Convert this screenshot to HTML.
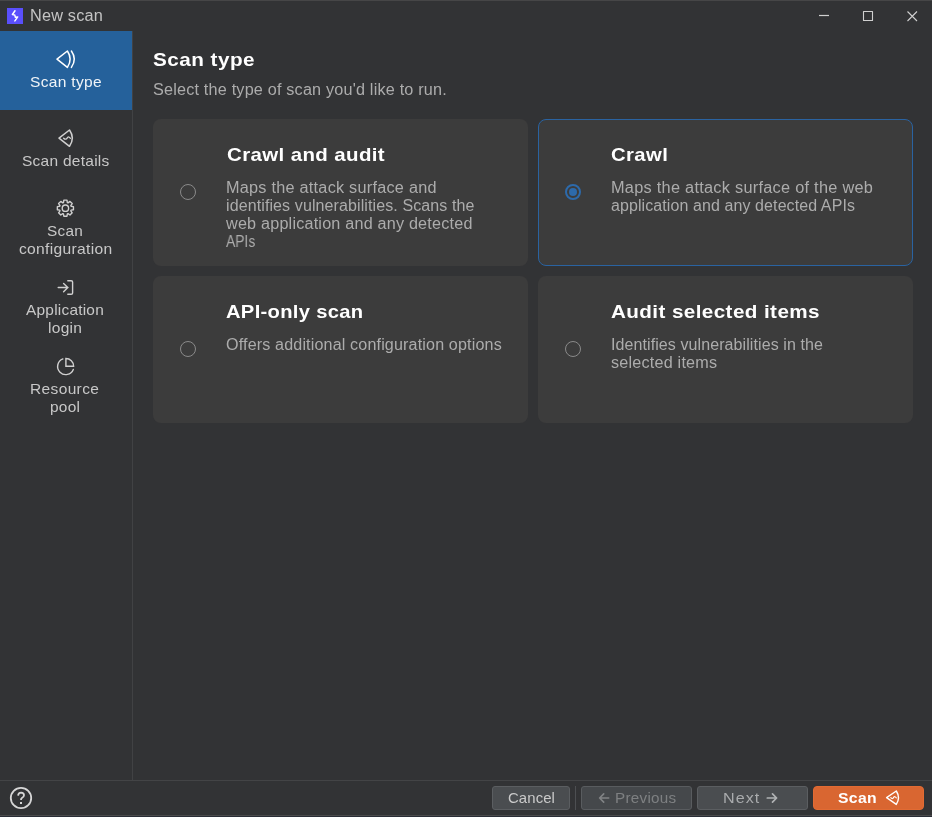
<!DOCTYPE html>
<html><head><meta charset="utf-8">
<style>
html,body{margin:0;padding:0;}
body{width:932px;height:817px;overflow:hidden;background:#323335;position:relative;font-family:"Liberation Sans",sans-serif;}
.a{position:absolute;}
.t{position:absolute;white-space:nowrap;line-height:1;transform-origin:0 0;will-change:transform;}
.card{position:absolute;background:#3c3c3c;border-radius:8px;box-sizing:border-box;}
.card.sel{border:1px solid #2a63a1;}
.radio{position:absolute;width:16px;height:16px;box-sizing:border-box;border-radius:50%;border:1.3px solid #8a8a8a;}
.radio.on{border:2.2px solid #2d6aab;}
.radio.on::after{content:"";position:absolute;left:1.8px;top:1.8px;width:8px;height:8px;border-radius:50%;background:#2d6aab;}
.btn{position:absolute;box-sizing:border-box;border-radius:3px;border:1px solid #5b5e61;background:#45484b;height:24px;top:786px;}
svg{position:absolute;left:0;top:0;}
</style></head><body>
<div class="a" style="left:0;top:0;width:932px;height:1px;background:#464647;"></div>
<div class="a" style="left:7px;top:8px;width:16px;height:16px;background:#5a4ffc;"></div>

<div class="a" style="left:0;top:31px;width:132px;height:79px;background:#25619b;"></div>
<div class="a" style="left:132px;top:31px;width:1px;height:749px;background:#414244;"></div>

<div class="card" style="left:153px;top:119px;width:375px;height:147px;"></div>
<div class="card sel" style="left:538px;top:119px;width:375px;height:147px;"></div>
<div class="card" style="left:153px;top:276px;width:375px;height:147px;"></div>
<div class="card" style="left:538px;top:276px;width:375px;height:147px;"></div>

<div class="radio" style="left:180px;top:184px;"></div>
<div class="radio on" style="left:565px;top:184px;"></div>
<div class="radio" style="left:180px;top:341px;"></div>
<div class="radio" style="left:565px;top:341px;"></div>

<div class="a" style="left:0;top:780px;width:932px;height:1px;background:#434446;"></div>
<div class="btn" style="left:492px;width:78px;background:#4a4d50;"></div>
<div class="a" style="left:575px;top:786px;width:1px;height:24px;background:#4d4f52;"></div>
<div class="btn" style="left:581px;width:111px;background:#45484b;border-color:#595c5f;"></div>
<div class="btn" style="left:697px;width:111px;background:#4a4d50;"></div>
<div class="btn" style="left:813px;width:111px;background:#d96631;border-color:#e26b33;border-radius:4px;"></div>

<div class="a" style="left:0;top:815px;width:932px;height:1px;background:#4a4a4b;"></div>
<div class="a" style="left:0;top:816px;width:932px;height:1px;background:#2a2d36;"></div>

<svg width="932" height="817" viewBox="0 0 932 817" fill="none" stroke-linecap="round" stroke-linejoin="round">
 <!-- app bolt -->
 <path d="M15 10.8 L12.4 14.5 L14.7 14.9 L15.4 17.2 L17.7 16.9 L14.9 20.9" stroke="#ffffff" stroke-width="1.5"/>
 <!-- window controls -->
 <path d="M819 15.5 H829" stroke="#d0d0d0" stroke-width="1.2" stroke-linecap="butt"/>
 <rect x="863.5" y="11.5" width="9" height="9" stroke="#d0d0d0" stroke-width="1.1"/>
 <path d="M907.5 11.5 L917 21 M917 11.5 L907.5 21" stroke="#d0d0d0" stroke-width="1.1" stroke-linecap="butt"/>
 <!-- scan type icon -->
 <path d="M67.4 51 L57 59.2 L67.4 67.4 Q72.9 59.2 67.4 51 Z" stroke="#ffffff" stroke-width="1.5"/>
 <path d="M71.4 51 Q77.2 59.2 71.4 67.4" stroke="#ffffff" stroke-width="1.5"/>
 <!-- scan details -->
 <path d="M69.5 130 L59 138.1 L69.5 146.3 Q75.2 138.1 69.5 130 Z" stroke="#d0d0d0" stroke-width="1.5"/>
 <path d="M63.6 138.2 Q65.2 139.8 66.6 138.8 L67.6 137.4 Q68.8 136.2 70.4 138.3" stroke="#d0d0d0" stroke-width="1.3"/>
 <!-- gear -->
 <path d="M63.45 202.53 L63.84 200.15 L66.96 200.15 L67.35 202.53 L68.03 202.81 L69.99 201.40 L72.20 203.61 L70.79 205.57 L71.07 206.25 L73.45 206.64 L73.45 209.76 L71.07 210.15 L70.79 210.83 L72.20 212.79 L69.99 215.00 L68.03 213.59 L67.35 213.87 L66.96 216.25 L63.84 216.25 L63.45 213.87 L62.77 213.59 L60.81 215.00 L58.60 212.79 L60.01 210.83 L59.73 210.15 L57.35 209.76 L57.35 206.64 L59.73 206.25 L60.01 205.57 L58.60 203.61 L60.81 201.40 L62.77 202.81Z" stroke="#d0d0d0" stroke-width="1.4"/>
 <circle cx="65.4" cy="208.2" r="3.2" stroke="#d0d0d0" stroke-width="1.4"/>
 <!-- login -->
 <path d="M58.2 287.5 H68 M63.6 283.4 L67.8 287.5 L63.6 291.7" stroke="#d0d0d0" stroke-width="1.4"/>
 <path d="M67.8 280.7 H71.2 Q72.6 280.7 72.6 282.1 V292.9 Q72.6 294.3 71.2 294.3 H67.8" stroke="#d0d0d0" stroke-width="1.4"/>
 <!-- pie -->
 <path d="M62.9 358.9 A8.1 8.1 0 1 0 73.3 369.4" stroke="#d0d0d0" stroke-width="1.4"/>
 <path d="M65.9 358.5 V366.2 H73.6 A7.7 7.7 0 0 0 65.9 358.5 Z" stroke="#d0d0d0" stroke-width="1.4" stroke-linejoin="miter"/>
 <!-- help -->
 <circle cx="21" cy="798" r="10.2" stroke="#d6d6d6" stroke-width="1.8"/>
 <path d="M18.1 795.6 Q18.3 792.6 21.1 792.6 Q24 792.8 24 795.3 Q24 797 21.9 798 Q21 798.6 21 800" stroke="#d6d6d6" stroke-width="1.8" stroke-linecap="butt"/>
 <rect x="20" y="802" width="2" height="2" fill="#d6d6d6"/>
 <!-- prev arrow -->
 <path d="M599.6 798 H608.7 M603.7 793.9 L599.6 798 L603.7 802.1" stroke="#818385" stroke-width="1.6"/>
 <!-- next arrow -->
 <path d="M767.3 798 H776.4 M772.5 793.9 L776.6 798 L772.5 802.1" stroke="#b0b2b4" stroke-width="1.7"/>
 <!-- scan btn icon -->
 <path d="M896.3 791 L886.6 797.6 L896.3 804.4 Q900.6 797.6 896.3 791 Z" stroke="#ffffff" stroke-width="1.4"/>
 <path d="M890.8 797.7 Q892 799 893.1 798.2 L893.9 797 Q894.8 796 896.3 797.8" stroke="#ffffff" stroke-width="1.2"/>
</svg>

<div class="t" style="left:30.38px;top:8px;font-size:16px;font-weight:400;color:#c4c4c4;letter-spacing:0.182px;transform:scaleX(1.0183)">New scan</div>
<div class="t" style="left:29.70px;top:74px;font-size:15px;font-weight:400;color:#f0f4f8;letter-spacing:0.308px;transform:scaleX(1.0358)">Scan type</div>
<div class="t" style="left:21.70px;top:153px;font-size:15px;font-weight:400;color:#c8c8c8;letter-spacing:0.254px;transform:scaleX(1.0332)">Scan details</div>
<div class="t" style="left:47.40px;top:223px;font-size:15px;font-weight:400;color:#c8c8c8;letter-spacing:0.259px;transform:scaleX(1.0224)">Scan</div>
<div class="t" style="left:18.60px;top:241px;font-size:15px;font-weight:400;color:#c8c8c8;letter-spacing:0.302px;transform:scaleX(1.0407)">configuration</div>
<div class="t" style="left:26.20px;top:302px;font-size:15px;font-weight:400;color:#c8c8c8;letter-spacing:0.218px;transform:scaleX(1.0290)">Application</div>
<div class="t" style="left:47.96px;top:320px;font-size:15px;font-weight:400;color:#c8c8c8;letter-spacing:0.281px;transform:scaleX(1.0357)">login</div>
<div class="t" style="left:29.96px;top:381px;font-size:15px;font-weight:400;color:#c8c8c8;letter-spacing:0.332px;transform:scaleX(1.0356)">Resource</div>
<div class="t" style="left:50.40px;top:399px;font-size:15px;font-weight:400;color:#c8c8c8;letter-spacing:0.262px;transform:scaleX(1.0273)">pool</div>
<div class="t" style="left:153.40px;top:50px;font-size:19px;font-weight:700;color:#ffffff;letter-spacing:0.443px;transform:scaleX(1.0891)">Scan type</div>
<div class="t" style="left:153.00px;top:82px;font-size:15.8px;font-weight:400;color:#acacac;letter-spacing:0.182px;transform:scaleX(1.0262)">Select the type of scan you&#39;d like to run.</div>
<div class="t" style="left:226.70px;top:145px;font-size:19px;font-weight:700;color:#ffffff;letter-spacing:0.349px;transform:scaleX(1.0775)">Crawl and audit</div>
<div class="t" style="left:225.60px;top:180px;font-size:15.8px;font-weight:400;color:#acacac;letter-spacing:0.231px;transform:scaleX(1.0295)">Maps the attack surface and</div>
<div class="t" style="left:225.60px;top:198px;font-size:15.8px;font-weight:400;color:#acacac;letter-spacing:0.097px;transform:scaleX(1.0143)">identifies vulnerabilities. Scans the</div>
<div class="t" style="left:225.60px;top:216px;font-size:15.8px;font-weight:400;color:#acacac;letter-spacing:0.192px;transform:scaleX(1.0248)">web application and any detected</div>
<div class="t" style="left:225.90px;top:234px;font-size:15.8px;font-weight:400;color:#acacac;letter-spacing:0.000px;transform:scaleX(0.8786)">APIs</div>
<div class="t" style="left:611.30px;top:145px;font-size:19px;font-weight:700;color:#ffffff;letter-spacing:0.370px;transform:scaleX(1.0666)">Crawl</div>
<div class="t" style="left:610.80px;top:180px;font-size:15.8px;font-weight:400;color:#acacac;letter-spacing:0.256px;transform:scaleX(1.0333)">Maps the attack surface of the web</div>
<div class="t" style="left:610.80px;top:198px;font-size:15.8px;font-weight:400;color:#acacac;letter-spacing:0.093px;transform:scaleX(1.0122)">application and any detected APIs</div>
<div class="t" style="left:226.40px;top:302px;font-size:19px;font-weight:700;color:#ffffff;letter-spacing:0.284px;transform:scaleX(1.0619)">API-only scan</div>
<div class="t" style="left:226.00px;top:337px;font-size:15.8px;font-weight:400;color:#acacac;letter-spacing:0.142px;transform:scaleX(1.0199)">Offers additional configuration options</div>
<div class="t" style="left:611.30px;top:302px;font-size:19px;font-weight:700;color:#ffffff;letter-spacing:0.374px;transform:scaleX(1.0867)">Audit selected items</div>
<div class="t" style="left:610.80px;top:337px;font-size:15.8px;font-weight:400;color:#acacac;letter-spacing:0.086px;transform:scaleX(1.0132)">Identifies vulnerabilities in the</div>
<div class="t" style="left:610.80px;top:355px;font-size:15.8px;font-weight:400;color:#acacac;letter-spacing:0.197px;transform:scaleX(1.0248)">selected items</div>
<div class="t" style="left:507.60px;top:791px;font-size:14.8px;font-weight:400;color:#cacaca;letter-spacing:0.083px;transform:scaleX(1.0090)">Cancel</div>
<div class="t" style="left:615.47px;top:791px;font-size:14.8px;font-weight:400;color:#7e8082;letter-spacing:0.252px;transform:scaleX(1.0305)">Previous</div>
<div class="t" style="left:722.71px;top:791px;font-size:14.8px;font-weight:400;color:#a9abad;letter-spacing:0.948px;transform:scaleX(1.0884)">Next</div>
<div class="t" style="left:837.60px;top:791px;font-size:14.8px;font-weight:700;color:#ffffff;letter-spacing:0.327px;transform:scaleX(1.0631)">Scan</div>
</body></html>
